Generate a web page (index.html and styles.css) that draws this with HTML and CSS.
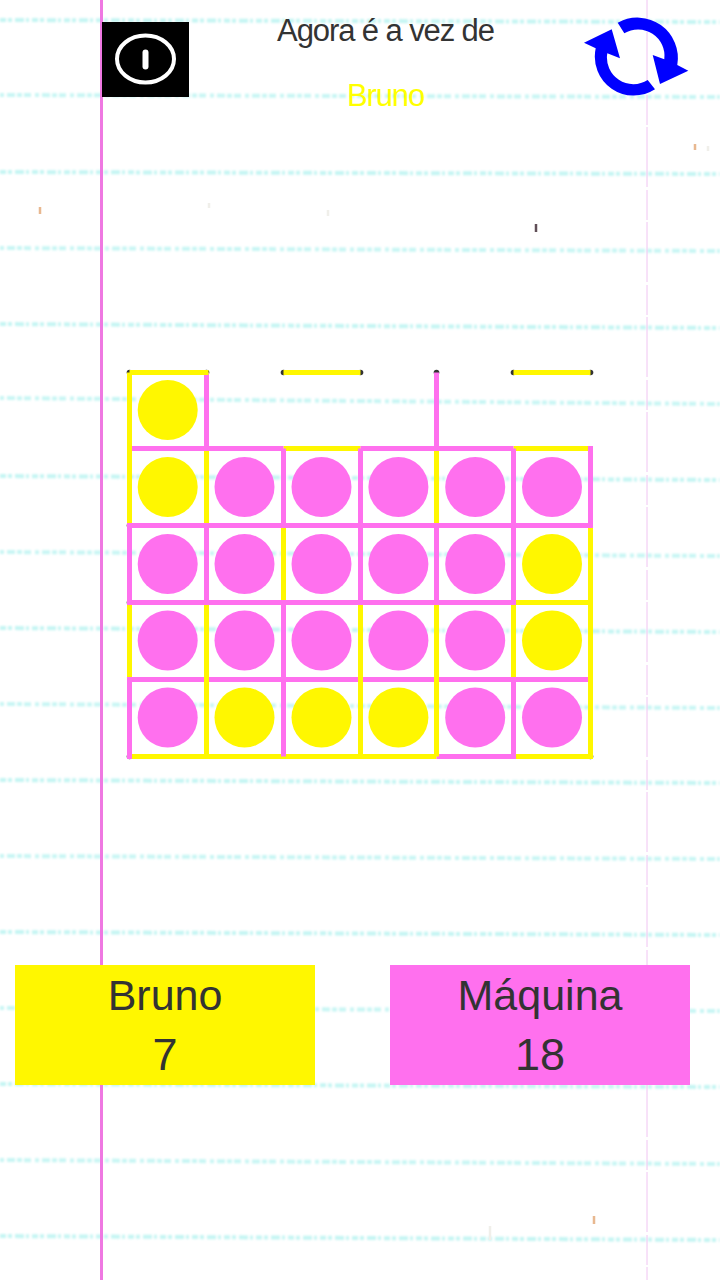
FILE: index.html
```html
<!DOCTYPE html>
<html lang="pt">
<head>
<meta charset="utf-8">
<title>Agora é a vez de Bruno</title>
<link rel="stylesheet" href="styles.css">
</head>
<body>
<svg class="paper" viewBox="0 0 720 1280" aria-hidden="true">
  <defs>
    <filter id="soft"><feGaussianBlur stdDeviation="1.3"/></filter>
    <filter id="softer"><feGaussianBlur stdDeviation="0.7"/></filter>
  </defs>
  <g filter="url(#soft)">
    <path class="rule rule-a" d="M0 20L720 22M0 172L720 174M0 324L720 328M0 476L720 480M0 628L720 632M0 780L720 783M0 932L720 935M0 1084L720 1087M0 1236L720 1240"/>
    <path class="rule rule-b" d="M0 95L720 97M0 248L720 251M0 398L720 404M0 552L720 556M0 704L720 708M0 856L720 859M0 1008L720 1011M0 1160L720 1164"/>
  </g>
  <g filter="url(#softer)">
    <path class="margin-main" d="M101.500 0V1280"/>
    <path class="margin-far" d="M647 0V1280"/>
    <path class="speck speck-brown" d="M40 207V214M695 144V150M594 1216V1224"/>
    <path class="speck speck-dark" d="M536 224V232"/>
    <path class="speck speck-grey" d="M209 203V208M708 146V151M490 1226V1240M328 210V216"/>
  </g>
</svg>

<header class="top">
  <div class="info-btn">
    <svg class="info-icon" viewBox="0 0 87 75">
      <ellipse class="info-ring" cx="43.500" cy="37" rx="28.500" ry="23.500"/>
      <path class="info-bar" d="M43.500 30.500V44.500"/>
    </svg>
  </div>
  <div class="turn">
    <p class="turn-label">Agora é a vez de</p>
    <p class="turn-name">Bruno</p>
  </div>
  <svg class="reload" viewBox="580 10 110 90">
    <path class="reload-arrow" d="M617.700 22.700A40.500 40.500 0 0 1 677.300 65L688.300 70.700L660 84L652.700 55L664.300 59.300A26.500 26.500 0 0 0 624.300 33.300Z"/>
    <path class="reload-arrow" d="M655 89.300A39 39 0 0 1 595.700 48.300L584 42.700L611.700 29.300L620 58.300L607.300 53.300A26.500 26.500 0 0 0 647.700 80Z"/>
  </svg>
</header>

<main class="board-wrap">
  <svg class="board" viewBox="120 360 480 410">
    <g class="nodes">
      <circle cx="129.500" cy="372.500" r="2.800"/><circle cx="206.500" cy="372.500" r="2.800"/><circle cx="283.500" cy="372.500" r="2.800"/><circle cx="360.500" cy="372.500" r="2.800"/><circle cx="436.500" cy="372.500" r="2.800"/><circle cx="513.500" cy="372.500" r="2.800"/><circle cx="590.500" cy="372.500" r="2.800"/>
      <circle cx="129.500" cy="525.500" r="2.800"/><circle cx="129.500" cy="602.500" r="2.800"/><circle cx="129.500" cy="756.500" r="2.800"/><circle cx="590.500" cy="756.500" r="2.800"/>
    </g>
    <path class="edge edge-y" d="M129.500 372.500V525.500M206.500 448.500V525.500M436.500 448.500V525.500M283.500 525.500V602.500M590.500 525.500V602.500M129.500 602.500V679.500M513.500 602.500V679.500"/>
    <path class="edge edge-y" d="M283.500 448.500H360.500M513.500 448.500H590.500M513.500 602.500H590.500M129.500 756.500H436.500M513.500 756.500H590.500"/>
    <path class="edge edge-p" d="M206.500 372.500V448.500M436.500 372.500V448.500M283.500 448.500V525.500M360.500 448.500V525.500M513.500 448.500V525.500M590.500 446V525.500M129.500 525.500V602.500M206.500 525.500V602.500M360.500 525.500V602.500M436.500 525.500V602.500M513.500 525.500V602.500M283.500 602.500V679.500M129.500 679.500V759M283.500 679.500V756.500M513.500 679.500V759"/>
    <path class="edge edge-p" d="M132 448.500H283.500M360.500 448.500H513.500M127 525.500H593M127 602.500H516M127 679.500H590.500M436.500 756.500H513.500"/>
    <path class="edge edge-y" d="M206.500 605V756.500M360.500 605V756.500M436.500 605V756.500M590.500 528V759M129.500 372.500H208.500M283.500 372.500H360.500M513.500 372.500H590.500"/>

    <circle class="dot dot-y" cx="167.700" cy="410" r="30"/>

    <circle class="dot dot-y" cx="167.700" cy="487" r="30"/><circle class="dot dot-p" cx="244.500" cy="487" r="30"/><circle class="dot dot-p" cx="321.500" cy="487" r="30"/><circle class="dot dot-p" cx="398.400" cy="487" r="30"/><circle class="dot dot-p" cx="475.200" cy="487" r="30"/><circle class="dot dot-p" cx="552" cy="487" r="30"/>

    <circle class="dot dot-p" cx="167.700" cy="564" r="30"/><circle class="dot dot-p" cx="244.500" cy="564" r="30"/><circle class="dot dot-p" cx="321.500" cy="564" r="30"/><circle class="dot dot-p" cx="398.400" cy="564" r="30"/><circle class="dot dot-p" cx="475.200" cy="564" r="30"/><circle class="dot dot-y" cx="552" cy="564" r="30"/>

    <circle class="dot dot-p" cx="167.700" cy="640.500" r="30"/><circle class="dot dot-p" cx="244.500" cy="640.500" r="30"/><circle class="dot dot-p" cx="321.500" cy="640.500" r="30"/><circle class="dot dot-p" cx="398.400" cy="640.500" r="30"/><circle class="dot dot-p" cx="475.200" cy="640.500" r="30"/><circle class="dot dot-y" cx="552" cy="640.500" r="30"/>

    <circle class="dot dot-p" cx="167.700" cy="717.500" r="30"/><circle class="dot dot-y" cx="244.500" cy="717.500" r="30"/><circle class="dot dot-y" cx="321.500" cy="717.500" r="30"/><circle class="dot dot-y" cx="398.400" cy="717.500" r="30"/><circle class="dot dot-p" cx="475.200" cy="717.500" r="30"/><circle class="dot dot-p" cx="552" cy="717.500" r="30"/>
  </svg>
</main>

<section class="scores">
  <div class="score score-y"><span>Bruno</span><span class="score-num">7</span></div>
  <div class="score score-p"><span>Máquina</span><span class="score-num">18</span></div>
</section>
</body>
</html>
```
FILE: styles.css
```css
* { box-sizing: border-box; }

html, body {
  margin: 0;
  padding: 0;
}

body {
  position: relative;
  width: 720px;
  height: 1280px;
  overflow: hidden;
  background: #fff;
  font-family: "Liberation Sans", Arial, sans-serif;
  color: #333;
}

/* notebook paper */
.paper {
  position: absolute;
  inset: 0;
  width: 720px;
  height: 1280px;
  z-index: -1;
}

.rule {
  fill: none;
  stroke-width: 4;
}

.rule-a {
  stroke: #c4f5f3;
  stroke-dasharray: 6 2 4 3 9 2 3 3;
}

.rule-b {
  stroke: #c8f6f4;
  stroke-dasharray: 4 3 8 2 5 2 7 4;
}

.margin-main {
  fill: none;
  stroke: #ef78e2;
  stroke-width: 3;
}

.margin-far {
  fill: none;
  stroke: #f0c4f2;
  stroke-width: 1;
  stroke-dasharray: 30 2 60 3;
}

.speck {
  fill: none;
  stroke-width: 2.500;
}

.speck-brown { stroke: #e8b890; }
.speck-dark { stroke: #605058; }
.speck-grey { stroke: #f0efea; }

/* top bar */
.top {
  display: grid;
  grid-template-columns: 87px 391px 110px;
  align-items: start;
  padding: 10px 0 0 102px;
  height: 360px;
}

.info-btn {
  width: 87px;
  height: 75px;
  margin-top: 12px;
  background: #000;
}

.info-icon {
  display: block;
  width: 87px;
  height: 75px;
}

.info-ring {
  fill: none;
  stroke: #fff;
  stroke-width: 4;
}

.info-bar {
  fill: none;
  stroke: #fff;
  stroke-width: 6;
  stroke-linecap: round;
}

.turn {
  padding-left: 2px;
  text-align: center;
}

.turn-label,
.turn-name {
  margin: 0;
  font-size: 31px;
  line-height: 65px;
  letter-spacing: -1.100px;
}

.turn-label {
  margin-top: -12px;
  color: #333;
}

.turn-name {
  color: #ffff00;
}

.reload {
  display: block;
  width: 110px;
  height: 90px;
}

.reload-arrow {
  fill: #0000ff;
}

/* board */
.board-wrap {
  padding-left: 120px;
  height: 605px;
}

.board {
  display: block;
  width: 480px;
  height: 410px;
}

.nodes circle {
  fill: #333;
}

.edge {
  fill: none;
  stroke-width: 5;
}

.edge-y { stroke: #fff700; }
.edge-p { stroke: #ff70ee; }

.dot-y { fill: #fff700; }
.dot-p { fill: #ff70ee; }

/* scores */
.scores {
  display: flex;
  gap: 75px;
  padding-left: 15px;
}

.score {
  display: flex;
  flex-direction: column;
  align-items: center;
  width: 300px;
  height: 120px;
  font-size: 43px;
  line-height: 60px;
}

.score-num {
  font-size: 45px;
}

.score-y { background: #fff700; }
.score-p { background: #ff70ee; }
```
